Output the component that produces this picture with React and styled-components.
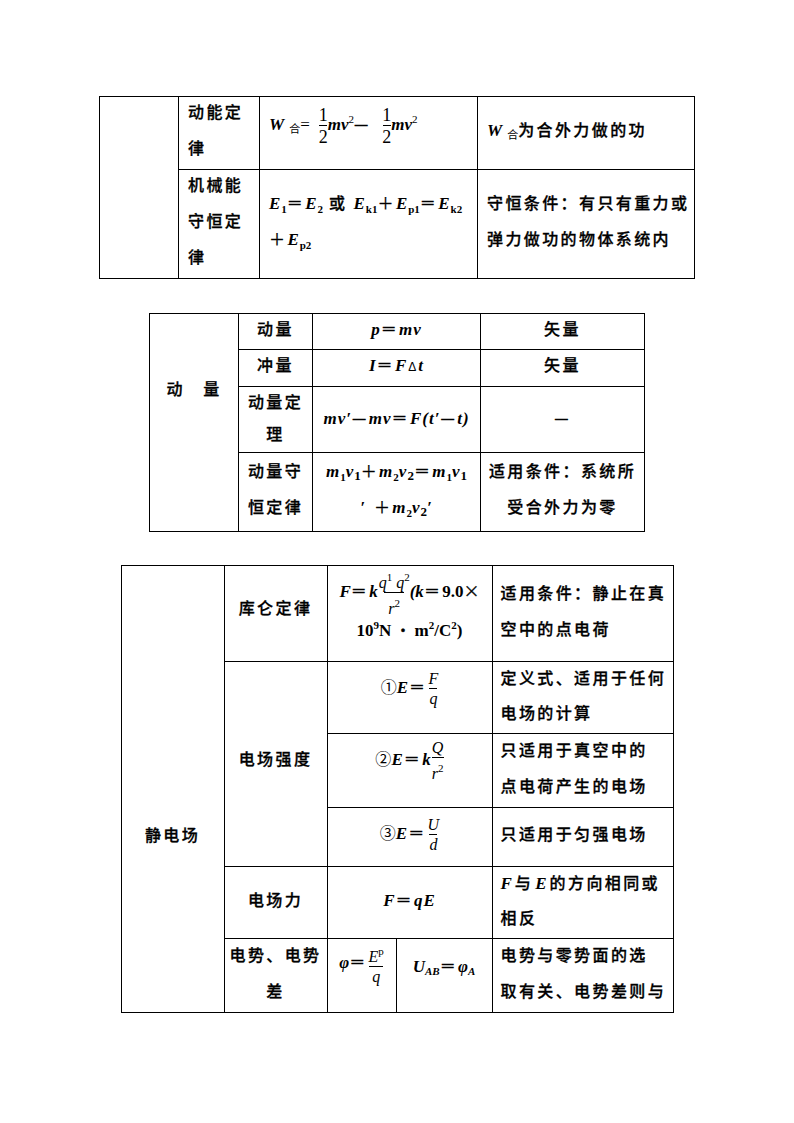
import React from 'react';
import styled, { createGlobalStyle } from 'styled-components';

const Global = createGlobalStyle`
  html, body { margin: 0; padding: 0; background: #fff; }
  body { font-family: "Noto Sans CJK SC", sans-serif; color: #000; }
`;

const Page = styled.div`
  width: 794px;
  min-height: 1123px;
  padding-top: 96px;
  box-sizing: border-box;
  display: flex;
  flex-direction: column;
  align-items: center;
  gap: 34px;
`;

const Table = styled.table`
  border-collapse: collapse;
  table-layout: fixed;
  width: ${p => p.$w}px;
  margin-top: ${p => p.$mt || 0}px;
  font-family: "Noto Sans CJK SC", sans-serif;
  font-size: 16px;
  font-weight: 500;
  letter-spacing: 2.4px;
  color: #000;
  -webkit-text-stroke: 0.3px #000;
`;

const Col = styled.col`
  width: ${p => p.$w}px;
`;

const Row = styled.tr`
  height: ${p => p.$h}px;
`;

const Cell = styled.td`
  border: 1px solid #000;
  padding: ${p => p.$pt || 0}px ${p => (p.$px ?? 8)}px 0;
  vertical-align: ${p => (p.$top ? 'top' : 'middle')};
  text-align: ${p => (p.$center ? 'center' : 'left')};
`;

const Line = styled.div`
  height: ${p => p.$h || 36}px;
  line-height: 28px;
  white-space: nowrap;
`;

const Mi = styled.span`
  font-family: "Liberation Serif", "Times New Roman", serif;
  font-weight: 700;
  font-style: italic;
  font-size: 17px;
  letter-spacing: ${p => p.$ls ?? 1}px;
  -webkit-text-stroke: 0;
  margin: 0 ${p => p.$mr || 0}px 0 ${p => p.$ml || 0}px;
`;

const Mr = styled.span`
  font-family: "Liberation Serif", "Times New Roman", serif;
  font-weight: ${p => (p.$light ? 400 : 700)};
  font-style: normal;
  font-size: 17px;
  letter-spacing: 0;
  -webkit-text-stroke: 0;
`;

const Op = styled.span`
  font-family: "Noto Sans CJK SC", sans-serif;
  font-weight: 400;
  font-size: 16px;
  letter-spacing: ${p => p.$ls ?? 2.4}px;
  margin: 0 ${p => p.$mr || 0}px 0 ${p => p.$ml || 0}px;
`;

const Sub = styled.span`
  font-family: ${p => (p.$cjk ? '"Noto Sans CJK SC", sans-serif' : '"Liberation Serif", serif')};
  font-weight: ${p => (p.$cjk ? 400 : 700)};
  font-style: ${p => (p.$it ? 'italic' : 'normal')};
  font-size: ${p => p.$s || 11}px;
  vertical-align: ${p => p.$v ?? -4}px;
  letter-spacing: 0;
  -webkit-text-stroke: 0;
  margin-left: ${p => p.$ml || 0}px;
`;

const Sup = styled.span`
  font-family: "Liberation Serif", serif;
  font-weight: ${p => (p.$bold ? 700 : 400)};
  font-style: normal;
  font-size: 11px;
  vertical-align: 7px;
  letter-spacing: 0;
  -webkit-text-stroke: 0;
`;

const Frac = styled.span`
  display: inline-flex;
  flex-direction: column;
  align-items: center;
  vertical-align: middle;
  margin: -14px ${p => p.$mr || 0}px -14px ${p => p.$ml || 1}px;
  font-family: "Liberation Serif", "Times New Roman", serif;
  font-weight: 400;
  font-style: ${p => (p.$it ? 'italic' : 'normal')};
  font-size: ${p => p.$fs || 16}px;
  line-height: ${p => p.$fs || 16}px;
  letter-spacing: 0;
  -webkit-text-stroke: 0;
`;

const Bar = styled.span`
  display: block;
  width: ${p => p.$w || 8}px;
  height: 1px;
  background: #000;
  margin: 1px 0 2px;
`;

const Circ = styled.span`
  font-family: "Noto Sans CJK SC", sans-serif;
  font-weight: 400;
  font-size: 16px;
  letter-spacing: 0;
  -webkit-text-stroke: 0;
`;

const Delta = styled.span`
  font-family: "Liberation Sans", sans-serif;
  font-weight: 400;
  font-size: 12px;
  letter-spacing: 0;
  -webkit-text-stroke: 0;
  margin: 0 2px;
`;

const Dash = () => <Op>—</Op>;

const WHe = () => (
  <>
    <Mi $ls={0}>W</Mi>
    <Sub $cjk $s={11} $v={-3} $ml={5}>合</Sub>
  </>
);

function TableOne() {
  return (
    <Table $w={596}>
      <colgroup>
        <Col $w={79} />
        <Col $w={81} />
        <Col $w={218} />
        <Col $w={217} />
      </colgroup>
      <tbody>
        <Row $h={73}>
          <Cell rowSpan={2} />
          <Cell $px={9}>
            <Line>动能定</Line>
            <Line>律</Line>
          </Cell>
          <Cell $px={9} $top $pt={8}>
            <Line>
              <WHe />
              <Mr $light>=</Mr>
              <Frac $ml={9} $fs={18}>
                <span>1</span>
                <Bar />
                <span>2</span>
              </Frac>
              <Mi $ls={0}>mv</Mi>
              <Sup>2</Sup>
              <Op $ls={0}>—</Op>
              <Frac $ml={14} $fs={18}>
                <span>1</span>
                <Bar />
                <span>2</span>
              </Frac>
              <Mi $ls={0}>mv</Mi>
              <Sup>2</Sup>
            </Line>
          </Cell>
          <Cell $px={9}>
            <Line>
              <WHe />
              为合外力做的功
            </Line>
          </Cell>
        </Row>
        <Row $h={109}>
          <Cell $px={9}>
            <Line>机械能</Line>
            <Line>守恒定</Line>
            <Line>律</Line>
          </Cell>
          <Cell $px={9}>
            <Line>
              <Mi>E</Mi>
              <Sub>1</Sub>
              <Op>＝</Op>
              <Mi>E</Mi>
              <Sub>2</Sub> 或 <Mi>E</Mi>
              <Sub>k1</Sub>
              <Op>＋</Op>
              <Mi>E</Mi>
              <Sub>p1</Sub>
              <Op>＝</Op>
              <Mi>E</Mi>
              <Sub>k2</Sub>
            </Line>
            <Line>
              <Op>＋</Op>
              <Mi>E</Mi>
              <Sub>p2</Sub>
            </Line>
          </Cell>
          <Cell $px={9}>
            <Line>守恒条件：有只有重力或</Line>
            <Line>弹力做功的物体系统内</Line>
          </Cell>
        </Row>
      </tbody>
    </Table>
  );
}

function TableTwo() {
  return (
    <Table $w={496}>
      <colgroup>
        <Col $w={89} />
        <Col $w={74} />
        <Col $w={168} />
        <Col $w={164} />
      </colgroup>
      <tbody>
        <Row $h={36}>
          <Cell rowSpan={4} $center $top $pt={60} $px={4}>
            <Line>动　量</Line>
          </Cell>
          <Cell $center $px={4} $top>
            <Line $h={34}>动量</Line>
          </Cell>
          <Cell $center $px={4} $top>
            <Line $h={34}>
              <Mi>p</Mi>
              <Op>＝</Op>
              <Mi>mv</Mi>
            </Line>
          </Cell>
          <Cell $center $px={4} $top>
            <Line $h={34}>矢量</Line>
          </Cell>
        </Row>
        <Row $h={37}>
          <Cell $center $px={4} $top>
            <Line $h={34}>冲量</Line>
          </Cell>
          <Cell $center $px={4} $top>
            <Line $h={34}>
              <Mi>I</Mi>
              <Op>＝</Op>
              <Mi $ls={0}>F</Mi>
              <Delta>Δ</Delta>
              <Mi>t</Mi>
            </Line>
          </Cell>
          <Cell $center $px={4} $top>
            <Line $h={34}>矢量</Line>
          </Cell>
        </Row>
        <Row $h={66}>
          <Cell $center $px={4} $top>
            <Line $h={32}>动量定</Line>
            <Line $h={32}>理</Line>
          </Cell>
          <Cell $center $px={4}>
            <Line $h={34}>
              <Mi>mv′</Mi>
              <Dash />
              <Mi>mv</Mi>
              <Op>＝</Op>
              <Mi>F</Mi>
              <Mi>(t′</Mi>
              <Dash />
              <Mi>t</Mi>
              <Mi>)</Mi>
            </Line>
          </Cell>
          <Cell $center $px={4}>
            <Line $h={34}>
              <Op>—</Op>
            </Line>
          </Cell>
        </Row>
        <Row $h={79}>
          <Cell $center $px={4}>
            <Line>动量守</Line>
            <Line>恒定律</Line>
          </Cell>
          <Cell $center $px={4}>
            <Line>
              <Mi>m</Mi>
              <Sub>1</Sub>
              <Mi>v</Mi>
              <Sub $s={13} $v={-3}>1</Sub>
              <Op>＋</Op>
              <Mi>m</Mi>
              <Sub>2</Sub>
              <Mi>v</Mi>
              <Sub $s={13} $v={-3}>2</Sub>
              <Op>＝</Op>
              <Mi>m</Mi>
              <Sub>1</Sub>
              <Mi>v</Mi>
              <Sub $s={13} $v={-3}>1</Sub>
            </Line>
            <Line>
              <Mi>′</Mi>
              <Op $ml={8}>＋</Op>
              <Mi>m</Mi>
              <Sub>2</Sub>
              <Mi>v</Mi>
              <Sub $s={13} $v={-3}>2</Sub>
              <Mi>′</Mi>
            </Line>
          </Cell>
          <Cell $center $px={4}>
            <Line>适用条件：系统所</Line>
            <Line>受合外力为零</Line>
          </Cell>
        </Row>
      </tbody>
    </Table>
  );
}

function TableThree() {
  return (
    <Table $w={553} $mt={-1}>
      <colgroup>
        <Col $w={103} />
        <Col $w={103} />
        <Col $w={69} />
        <Col $w={96} />
        <Col $w={181} />
      </colgroup>
      <tbody>
        <Row $h={96}>
          <Cell rowSpan={6} $center $top $pt={254} $px={4}>
            <Line>静电场</Line>
          </Cell>
          <Cell $center $px={4} $top $pt={27}>
            <Line>库仑定律</Line>
          </Cell>
          <Cell colSpan={2} $center $px={4} $top $pt={10}>
            <Line $h={35}>
              <Mi $ls={0}>F</Mi>
              <Op>＝</Op>
              <Mi $ls={0}>k</Mi>
              <Frac $it $ml={0}>
                <span>
                  q<Sup>1</Sup> q<Sup>2</Sup>
                </span>
                <Bar $w={20} />
                <span>
                  r<Sup>2</Sup>
                </span>
              </Frac>
              <Mi $ls={0}>(k</Mi>
              <Op>＝</Op>
              <Mr>9.0</Mr>
              <Op $ls={0}>×</Op>
            </Line>
            <Line $h={35}>
              <Mr>10</Mr>
              <Sup $bold>9</Sup>
              <Mr>N</Mr>
              <Op $ls={0}> · </Op>
              <Mr>m</Mr>
              <Sup $bold>2</Sup>
              <Mr>/C</Mr>
              <Sup $bold>2</Sup>
              <Mr>)</Mr>
            </Line>
          </Cell>
          <Cell $px={8}>
            <Line>适用条件：静止在真</Line>
            <Line>空中的点电荷</Line>
          </Cell>
        </Row>
        <Row $h={72}>
          <Cell rowSpan={3} $center $px={4} $top $pt={82}>
            <Line>电场强度</Line>
          </Cell>
          <Cell colSpan={2} $center $px={4} $top $pt={10}>
            <Line>
              <Circ>①</Circ>
              <Mi>E</Mi>
              <Op>＝</Op>
              <Frac $it $ml={0}>
                <span>F</span>
                <Bar $w={8} />
                <span>q</span>
              </Frac>
            </Line>
          </Cell>
          <Cell $px={8}>
            <Line $h={35}>定义式、适用于任何</Line>
            <Line $h={35}>电场的计算</Line>
          </Cell>
        </Row>
        <Row $h={74}>
          <Cell colSpan={2} $center $px={4} $top $pt={10}>
            <Line>
              <Circ>②</Circ>
              <Mi>E</Mi>
              <Op>＝</Op>
              <Mi $ls={0}>k</Mi>
              <Frac $it $ml={0}>
                <span>Q</span>
                <Bar $w={12} />
                <span>
                  r<Sup>2</Sup>
                </span>
              </Frac>
            </Line>
          </Cell>
          <Cell $px={8}>
            <Line>只适用于真空中的</Line>
            <Line>点电荷产生的电场</Line>
          </Cell>
        </Row>
        <Row $h={59}>
          <Cell colSpan={2} $center $px={4} $top $pt={10}>
            <Line>
              <Circ>③</Circ>
              <Mi>E</Mi>
              <Op>＝</Op>
              <Frac $it $ml={0}>
                <span>U</span>
                <Bar $w={8} />
                <span>d</span>
              </Frac>
            </Line>
          </Cell>
          <Cell $px={8}>
            <Line>只适用于匀强电场</Line>
          </Cell>
        </Row>
        <Row $h={72}>
          <Cell $center $px={4}>
            <Line>电场力</Line>
          </Cell>
          <Cell colSpan={2} $center $px={4}>
            <Line>
              <Mi>F</Mi>
              <Op>＝</Op>
              <Mi>qE</Mi>
            </Line>
          </Cell>
          <Cell $px={8}>
            <Line $h={35}>
              <Mi $mr={2}>F</Mi>与<Mi $ml={2} $mr={2}>E</Mi>的方向相同或
            </Line>
            <Line $h={35}>相反</Line>
          </Cell>
        </Row>
        <Row $h={74}>
          <Cell $center $px={4}>
            <Line>电势、电势</Line>
            <Line>差</Line>
          </Cell>
          <Cell $center $px={2} $top $pt={8}>
            <Line>
              <Mi $ls={0}>φ</Mi>
              <Op>＝</Op>
              <Frac $it $ml={0}>
                <span>
                  E<Sup>p</Sup>
                </span>
                <Bar $w={14} />
                <span>q</span>
              </Frac>
            </Line>
          </Cell>
          <Cell $center $px={2} $top $pt={12}>
            <Line>
              <Mi $ls={0}>U</Mi>
              <Sub $it $s={11} $v={-3}>AB</Sub>
              <Op>＝</Op>
              <Mi $ls={0}>φ</Mi>
              <Sub $it $s={11} $v={-3}>A</Sub>
            </Line>
          </Cell>
          <Cell $px={8}>
            <Line>电势与零势面的选</Line>
            <Line>取有关、电势差则与</Line>
          </Cell>
        </Row>
      </tbody>
    </Table>
  );
}

export default function App() {
  return (
    <>
      <Global />
      <Page>
        <TableOne />
        <TableTwo />
        <TableThree />
      </Page>
    </>
  );
}
